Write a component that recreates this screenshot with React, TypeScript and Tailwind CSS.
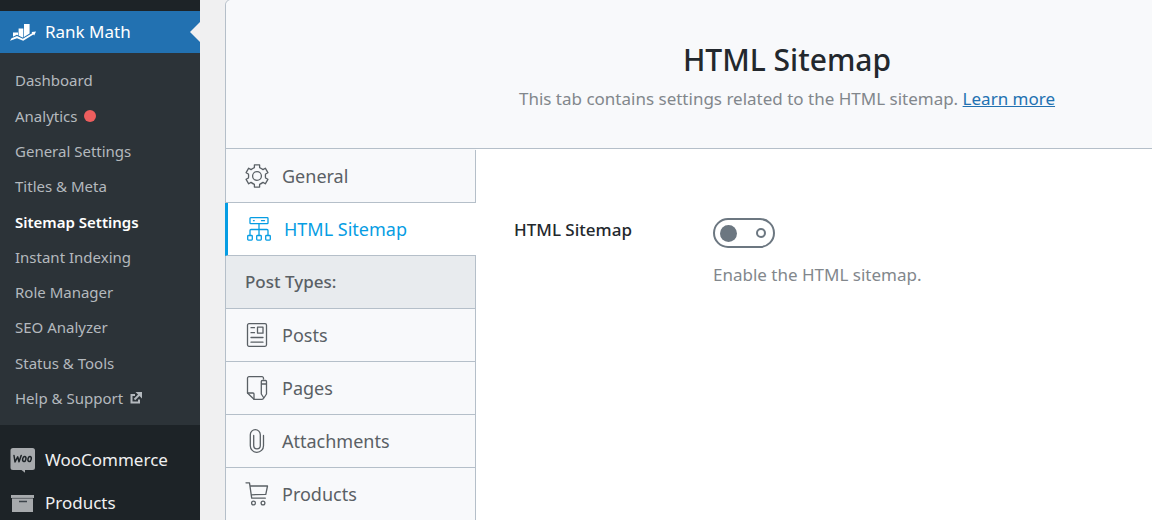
import { useState, type ReactNode } from "react";
import { clsx } from "clsx";

const submenu = [
  "Dashboard",
  "Analytics",
  "General Settings",
  "Titles & Meta",
  "Sitemap Settings",
  "Instant Indexing",
  "Role Manager",
  "SEO Analyzer",
  "Status & Tools",
  "Help & Support",
];

const RankMathIcon = () => (
  <svg className="w-[26px] h-[20px]" viewBox="0 0 26 20" fill="currentColor">
    <path d="M3 10.500h5v2.700l-1.200-.4L3 14.800z" />
    <path d="M8.600 6.500h4.700v8.700l-.9.300-3.800-1.900z" />
    <path d="M14 2h5.600v9.600l-5.600 3.400z" />
    <path d="M0 18.800l1.500-2.600L7 14l5.800 2.700 9.400-5.500-.6-1.100 4.400-.7-1.800 4-.8-.9-10.200 6.300L7 16.200z" />
  </svg>
);

const WooIcon = () => (
  <svg className="w-[26px] h-[26px]" viewBox="0 0 26 26" fill="none">
    <path d="M3 1h19.500a2.500 2.500 0 0 1 2.500 2.500v17a2.500 2.500 0 0 1-2.500 2.500H15v2.800L11.500 23H3A2.500 2.500 0 0 1 .5 20.500v-17A2.500 2.500 0 0 1 3 1z" fill="#a7aaad" />
    <g stroke="#1d2327" strokeWidth="1.500" strokeLinecap="round" strokeLinejoin="round">
      <path d="M4 8.500l1 6.500 2.700-5.200 1.300 5 2.200-6.300" />
      <ellipse cx="14.300" cy="12" rx="1.600" ry="2.600" transform="rotate(12 14.300 12)" />
      <ellipse cx="19.600" cy="12" rx="1.600" ry="2.600" transform="rotate(12 19.600 12)" />
    </g>
  </svg>
);

const ArchiveIcon = () => (
  <svg className="w-[26px] h-[20px]" viewBox="0 0 26 20">
    <path d="M1 2h23v3H1z" fill="#a7aaad" />
    <path d="M2 5.500h21V19H2z" fill="#a7aaad" />
    <path d="M2 5.300h21" stroke="#6c7075" strokeWidth="1" />
    <path d="M9 8.500h8" stroke="#3c434a" strokeWidth="1.500" />
  </svg>
);

const ExternalIcon = () => (
  <svg className="w-3 h-3" viewBox="0 0 12 12" fill="none" stroke="currentColor" strokeWidth="2">
    <path d="M5 3H1.500v7.500H9V7.500" />
    <path d="M4.500 7.500l5-5" />
    <path d="M5.500 0H12v6.500z" fill="currentColor" stroke="none" />
  </svg>
);

const LineIcon = ({ children }: { children: ReactNode }) => (
  <svg
    className="w-6 h-6 shrink-0"
    viewBox="0 0 24 24"
    fill="none"
    stroke="currentColor"
    strokeWidth="1.300"
    strokeLinecap="round"
    strokeLinejoin="round"
  >
    {children}
  </svg>
);

const GearIcon = () => (
  <LineIcon>
    <circle cx="12" cy="12" r="4.400" />
    <path d="M9.400.9h5.200v2.700Q16.200 4.300 18 5.600l2.300-1.400 2.600 4.500-2.300 1.300Q20.200 12 20.600 14l2.300 1.300-2.600 4.500-2.300-1.400q-1.800 1.300-3.400 2v2.700H9.400v-2.700Q7.800 19.700 6 18.400l-2.300 1.400-2.600-4.500L3.400 14Q3.800 12 3.400 10L1.100 8.700l2.600-4.500L6 5.600q1.800-1.300 3.400-2z" />
  </LineIcon>
);

const SitemapIcon = () => (
  <LineIcon>
    <rect x="3" y=".7" width="18" height="6" rx=".8" />
    <path d="M6.500 3.700h.7M14.500 3.700h3M12 7v11M3 18v-4.500a1 1 0 0 1 1-1h16a1 1 0 0 1 1 1V18" />
    <rect x=".7" y="18.500" width="4.600" height="4.600" rx=".8" />
    <rect x="9.700" y="18.500" width="4.600" height="4.600" rx=".8" />
    <rect x="18.700" y="18.500" width="4.600" height="4.600" rx=".8" />
  </LineIcon>
);

const PostIcon = () => (
  <LineIcon>
    <rect x="2.500" y=".7" width="19" height="22.600" rx="1.500" />
    <rect x="12.500" y="4.200" width="5.500" height="6" />
    <path d="M6 4.700h3.500M6 9.700h3.500M6 14.500h12M6 19.200h12" />
  </LineIcon>
);

const PageIcon = () => (
  <LineIcon>
    <path d="M18.500 3V2.200A1.500 1.500 0 0 0 17 .7H4A1.500 1.500 0 0 0 2.500 2.200V17L9 23.300h8a1.500 1.500 0 0 0 1.500-1.300" />
    <path d="M2.500 17H8a1 1 0 0 1 1 1v5.300" />
    <path d="M16.300 5.500a1 1 0 0 1 1-1h3.200a1 1 0 0 1 1 1V18l-2.600 4-2.600-4zM16.300 8h5.200" />
  </LineIcon>
);

const ClipIcon = () => (
  <LineIcon>
    <path d="M8.700 6.500v10a3.300 3.300 0 0 0 6.600 0V5.700a5 5 0 0 0-10 0v11a6.600 6.600 0 0 0 13.200 0V6.500" />
  </LineIcon>
);

const CartIcon = () => (
  <LineIcon>
    <path d="M1 .8h3.500l2.200 15.400h13.600M5 4h17.500l-1.700 8.300-14.600.5" />
    <circle cx="8.500" cy="21" r="1.900" />
    <circle cx="18" cy="21" r="1.900" />
  </LineIcon>
);

const Tab = ({ icon, label, active = false }: { icon: ReactNode; label: string; active?: boolean }) => (
  <a
    href="#"
    className={clsx(
      "flex items-center gap-[13px] h-[53px] border-b border-[#b5bfc9] text-[18px]",
      active
        ? "-ml-px pl-[19px] border-l-3 border-l-[#069de3] bg-white text-[#069de3]"
        : "pl-[19px] border-r bg-[#f8f9fb] text-[#5a6065]"
    )}
  >
    {icon}
    {label}
  </a>
);

const Sidebar = () => (
  <nav className="w-[200px] shrink-0 pt-[11px] bg-[#1d2327] text-white">
    <a href="#" className="relative flex items-center gap-[9px] h-[42px] pl-[10px] bg-[#2271b1] text-[17px]">
      <RankMathIcon />
      Rank Math
      <span className="absolute right-0 border-y-10 border-r-10 border-y-transparent border-r-[#f0f0f1]" />
    </a>
    <ul className="flex flex-col h-[372px] pt-[10px] pb-[9px] bg-[#2c3338] text-[15px] text-[#b4b9be]">
      {submenu.map((item) => (
        <li key={item} className="flex-1 flex items-center">
          <a
            href="#"
            className={clsx("flex items-center gap-[7px] pl-[15px]", item === "Sitemap Settings" && "font-semibold text-white")}
          >
            {item}
            {item === "Analytics" && <span className="w-3 h-3 rounded-full bg-[#ed5e5e]" />}
            {item === "Help & Support" && <ExternalIcon />}
          </a>
        </li>
      ))}
    </ul>
    <div className="pt-[13px] text-[17px] text-[#f0f0f1]">
      <a href="#" className="flex items-center gap-[9px] h-[43px] pl-[10px]">
        <WooIcon />
        WooCommerce
      </a>
      <a href="#" className="flex items-center gap-[9px] h-[43px] pl-[10px]">
        <ArchiveIcon />
        Products
      </a>
    </div>
  </nav>
);

export default function App() {
  const [enabled, setEnabled] = useState(false);

  return (
    <div className="flex h-screen overflow-hidden bg-[#f0f0f1] font-['Noto_Sans',sans-serif]">
      <Sidebar />
      <main className="flex-1 min-w-0 pl-[25px] overflow-hidden">
        {/* Settings panel runs past the right edge on narrow windows */}
        <div className="min-w-[1124px] min-h-screen -mt-px border border-[#b5bfc9] rounded-t-md bg-white">
          <header className="pt-10 h-[149px] rounded-t-md border-b border-[#b5bfc9] bg-[#f8f9fb] text-center">
            <h1 className="text-[30px] leading-10 font-medium text-[#23282d]">HTML Sitemap</h1>
            <p className="pt-1 text-[17px] leading-[30px] text-[#82878c]">
              This tab contains settings related to the HTML sitemap.{" "}
              <a href="#" className="text-[#2271b1] underline">Learn more</a>
            </p>
          </header>

          <div className="flex">
            <div className="w-[250px] shrink-0 pt-px bg-[#f8f9fb]">
              <Tab icon={<GearIcon />} label="General" />
              <Tab icon={<SitemapIcon />} label="HTML Sitemap" active />
              <h2 className="flex items-center h-[53px] pl-[19px] border-b border-r border-[#b5bfc9] bg-[#e8ebee] text-[17px] font-medium text-[#5a6065]">
                Post Types:
              </h2>
              <Tab icon={<PostIcon />} label="Posts" />
              <Tab icon={<PageIcon />} label="Pages" />
              <Tab icon={<ClipIcon />} label="Attachments" />
              <Tab icon={<CartIcon />} label="Products" />
            </div>

            <div className="flex flex-1 pt-[69px] pl-[38px]">
              <label htmlFor="html-sitemap" className="w-[199px] text-[17px] leading-6 font-medium text-[#23282d]">
                HTML Sitemap
              </label>
              <div>
                <label
                  className={clsx(
                    "flex items-center justify-between w-[62px] h-[30px] px-[5px] border-2 border-[#6c7781] rounded-full cursor-pointer",
                    enabled && "flex-row-reverse"
                  )}
                >
                  <input
                    id="html-sitemap"
                    type="checkbox"
                    className="sr-only"
                    checked={enabled}
                    onChange={(e) => setEnabled(e.target.checked)}
                  />
                  <span className="w-[17px] h-[17px] rounded-full bg-[#6c7781]" />
                  <span className="w-[10px] h-[10px] mr-0.5 rounded-full border-2 border-[#6c7781]" />
                </label>
                <p className="pt-[15px] text-[17px] leading-6 text-[#82878c]">Enable the HTML sitemap.</p>
              </div>
            </div>
          </div>
        </div>
      </main>
    </div>
  );
}
